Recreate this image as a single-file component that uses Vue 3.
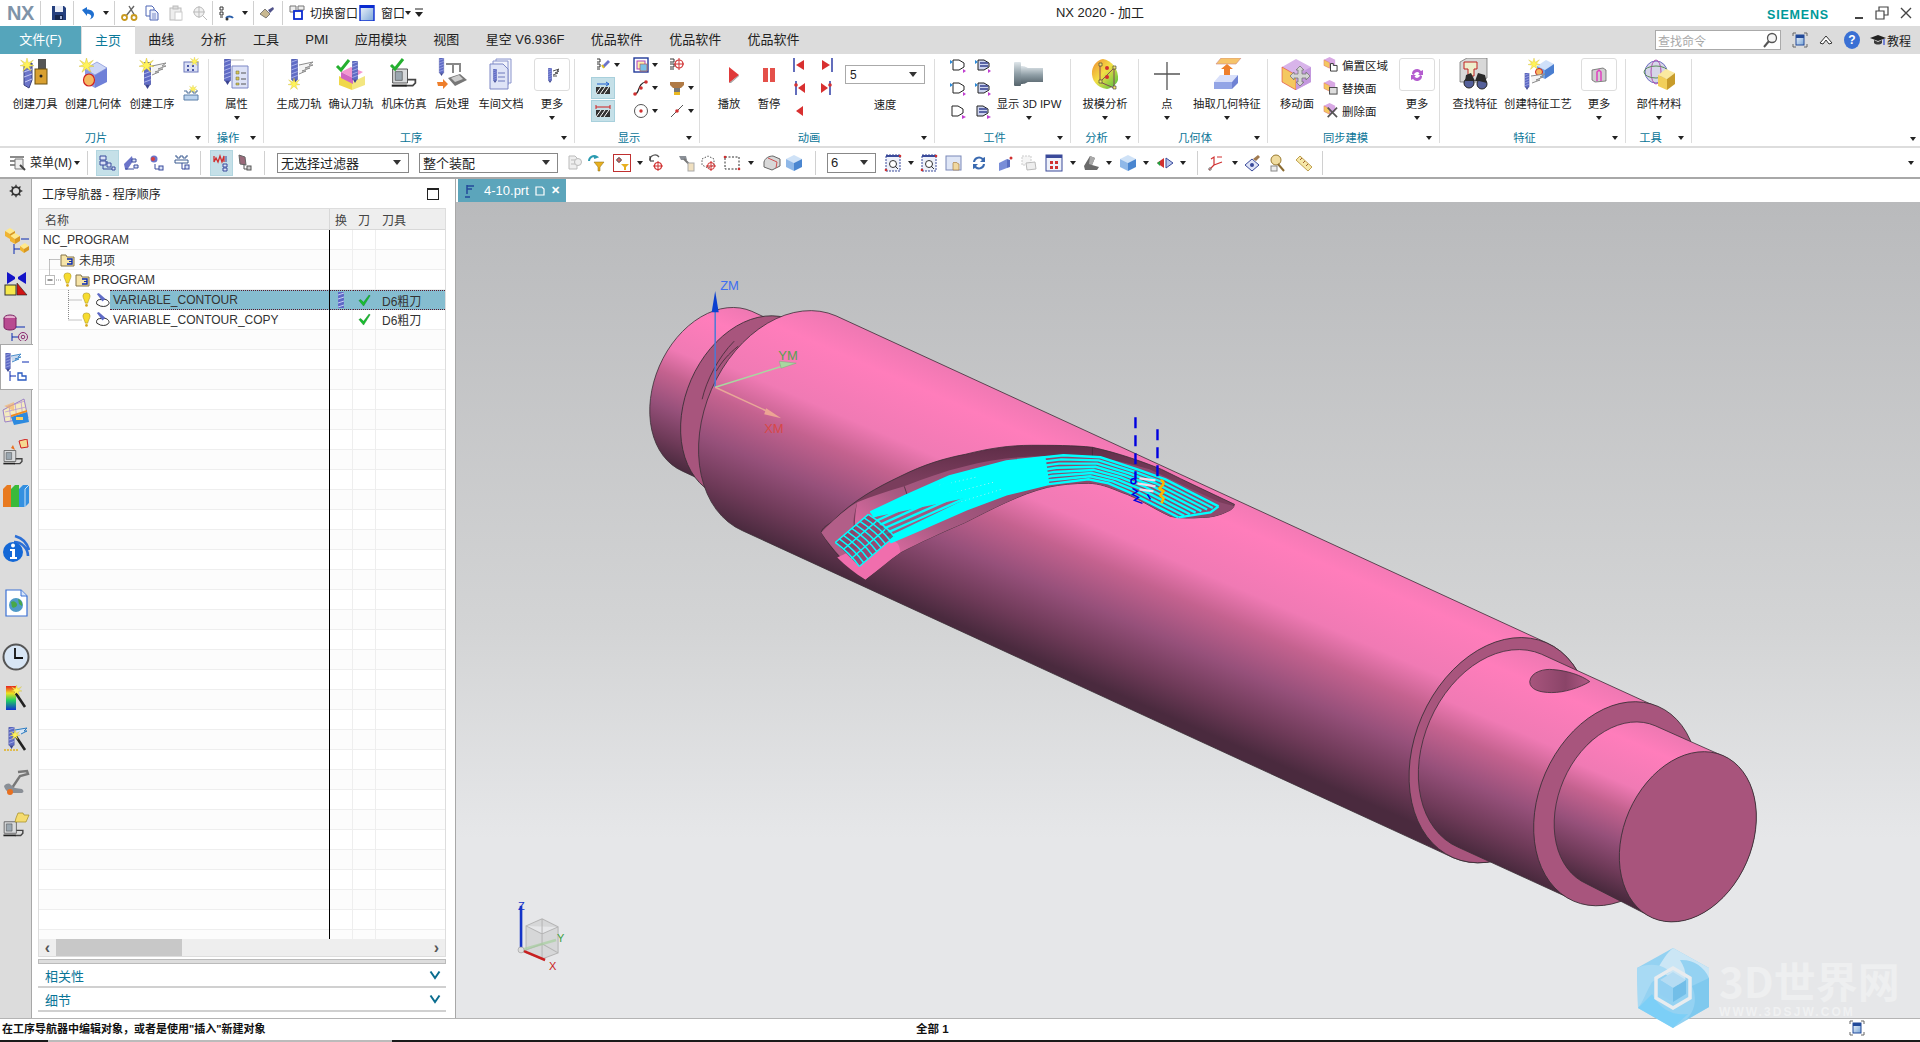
<script setup>
const place = (items) => {
  let cur = 0
  return items.map((it) => {
    const out = { ...it, ml: it.x - cur }
    cur = it.x + it.w
    return out
  })
}
const ic = (n, c, w = 18, on = false) => ({ k: 'i', n, x: c - w / 2, w, on })
const sep = (c) => ({ k: 'sep', x: c - 1, w: 2 })
const car = (c) => ({ k: 'cr', x: c - 4, w: 8 })
const txt = (text, x, w) => ({ k: 'text', text, x, w })
const combo = (text, x, w) => ({ k: 'combo', text, x, w })

const titleItems = place([
  { k: 'nx', text: 'NX', x: 4, w: 33 },
  sep(40), ic('s-save', 59), sep(73), ic('s-undo', 88), car(106), sep(114),
  ic('s-cut', 129), ic('s-copy', 152), ic('s-paste', 176), ic('s-move', 200), sep(212),
  ic('s-orient', 226), car(245), sep(253), ic('s-brush', 267), sep(282),
  ic('s-switch', 297), txt('切换窗口', 309, 50), ic('s-window', 367), txt('窗口', 380, 26), car(408), ic('s-cust', 419, 10),
  { k: 'title', text: 'NX 2020 - 加工', x: 1055, w: 90 },
  { k: 'sie', text: 'SIEMENS', x: 1767, w: 62 },
  ic('w-min', 1859, 12), ic('w-max', 1882, 14), ic('w-close', 1906, 14),
])

const tabs = ['主页', '曲线', '分析', '工具', 'PMI', '应用模块', '视图', '星空 V6.936F', '优品软件', '优品软件', '优品软件']

const big = (icon, text, w, caret = false) => ({ t: 'big', icon, text, w, caret })
const more = (icon, w) => ({ t: 'more', icon, text: '更多', w })
const col = (w, rows, h = 23) => ({ t: 'col', w, rows, h })
const r = (n, caret = false, on = false) => ({ n, caret, on })

const ribbon = [
  { label: '刀片', w: 209, pad: 6, items: [
    big('b-tool', '创建刀具', 58), big('b-geom', '创建几何体', 58), big('b-oper', '创建工序', 60),
    col(18, [r('s-prog'), r('s-mill')], 28),
  ] },
  { label: '操作', w: 55, pad: 1, items: [big('b-attr', '属性', 53, true)] },
  { label: '工序', w: 311, pad: 9, items: [
    big('b-gen', '生成刀轨', 52), big('b-verify', '确认刀轨', 52), big('b-sim', '机床仿真', 54),
    big('b-post', '后处理', 42), big('b-doc', '车间文档', 56), more('s-path', 46),
  ] },
  { label: '显示', w: 125, pad: 9, items: [
    col(38, [r('s-flag', true), r('s-hatch1', false, true), r('s-hatch2', false, true)]),
    col(38, [r('s-square', true), r('s-curve', true), r('s-circle', true)]),
    col(34, [r('s-target'), r('s-mug', true), r('s-line', true)]),
  ] },
  { label: '动画', w: 235, pad: 9, items: [
    big('b-play', '播放', 40), big('b-pause', '暂停', 40),
    col(20, [r('a-first'), r('a-stepb'), r('a-rev')]),
    col(36, [r('a-last'), r('a-stepf')]),
    { t: 'speed', w: 80, value: '5', text: '速度' },
  ] },
  { label: '工件', w: 136, pad: 11, items: [
    col(24, [r('w-a'), r('w-a'), r('w-b')]),
    col(26, [r('w-c'), r('w-c'), r('w-d')]),
    big('b-ipw', '显示 3D IPW', 66, true),
  ] },
  { label: '分析', w: 68, pad: 1, items: [big('b-draft', '拔模分析', 66, true)] },
  { label: '几何体', w: 129, pad: 4, items: [big('b-point', '点', 48, true), big('b-extract', '抽取几何特征', 72, true)] },
  { label: '同步建模', w: 172, pad: 4, items: [
    big('b-move', '移动面', 50),
    { t: 'list', w: 72, rows: [{ n: 's-off', text: '偏置区域' }, { n: 's-rep', text: '替换面' }, { n: 's-del', text: '删除面' }] },
    more('s-sync', 46),
  ] },
  { label: '特征', w: 186, pad: 7, items: [big('b-find', '查找特征', 56), big('b-feat', '创建特征工艺', 70), more('s-box', 52)] },
  { label: '工具', w: 66, pad: 0, items: [big('b-mat', '部件材料', 66, true)] },
]

const toolItems = place([
  ic('t-menu', 18, 18), txt('菜单(M)', 30, 42), car(77), sep(87),
  ic('t-n1', 107.5, 23, true), ic('t-n2', 131), ic('t-n3', 157), ic('t-n4', 183), sep(200),
  ic('t-n5', 221.5, 23, true), ic('t-n6', 245), sep(264),
  combo('无选择过滤器', 277, 132), combo('整个装配', 419, 139),
  ic('t-ghost', 574), ic('t-filter', 596), ic('t-target', 622), car(640), ic('t-cursor', 656), ic('t-hammer', 687),
  ic('t-dots', 709), ic('t-rect', 732), car(751), ic('t-face', 772), ic('t-cube', 794), sep(815),
  combo('6', 827, 49), ic('t-zoom', 893), car(911), ic('t-zoom', 929), ic('t-pan', 954), ic('t-rot', 979),
  ic('t-persp', 1006), ic('t-gbox', 1029), ic('t-grid', 1054), car(1073), ic('t-shade', 1091), car(1109),
  ic('t-cube', 1128), car(1146), ic('t-mir', 1165), car(1183), sep(1197),
  ic('t-csys', 1216), car(1235), ic('t-dia', 1252), ic('t-wiz', 1278), ic('t-rule', 1304), sep(1322), car(1911),
])

const railIcons = ['r-asm', 'r-con', 'r-part', 'r-nav', 'r-table', 'r-mach', 'r-books', 'r-info', 'r-web', 'r-clock', 'r-rainbow', 'r-wand', 'r-wrench', 'r-folder']
const railGaps = [28, 15, 16, 12, 17, 13, 14, 25, 27, 26, 14, 14, 14, 14]

const emptyRows = 31

// geometry of the shaft: every section is a tilted ellipse swept along the axis
const ROT = 113.5
const U = [-0.399, 0.917]
const RATIO = 0.724
const pts = (c, a) => ({
  top: `${(c[0] - U[0] * a).toFixed(1)} ${(c[1] - U[1] * a).toFixed(1)}`,
  bot: `${(c[0] + U[0] * a).toFixed(1)} ${(c[1] + U[1] * a).toFixed(1)}`,
})
const cyl = (id, c1, a1, c2, a2) => {
  const p1 = pts(c1, a1)
  const p2 = pts(c2, a2)
  return {
    id,
    d: `M${p1.top} A${a1} ${a1 * RATIO} ${ROT} 0 0 ${p1.bot} L${p2.bot} A${a2} ${a2 * RATIO} ${ROT} 0 0 ${p2.top} Z`,
    x1: c1[0] - U[0] * a1, y1: c1[1] - U[1] * a1, x2: c1[0] + U[0] * a1, y2: c1[1] + U[1] * a1,
  }
}
const disc = (c, a) => ({ cx: c[0], cy: c[1], rx: a, ry: a * RATIO, tr: `rotate(${ROT} ${c[0]} ${c[1]})` })

const flange = cyl('gf', [718, 392], 87, [772, 417], 87)
const groove = disc([755, 408], 95)
const body = cyl('gb', [790, 424], 117, [1500, 750.5], 117)
const ring1 = disc([1500, 750.5], 117)
const mid = cyl('gm', [1500, 751], 105, [1616, 804], 105)
const ring2 = disc([1616, 804], 106)
const tail = cyl('gt', [1621, 805], 86, [1688, 837], 88)
const face = disc([1688, 837], 88.4)
const sections = [flange, body, mid, tail]

const stops = [[0, '#ee78b2'], [0.14, '#ff7dbb'], [0.38, '#f07ab4'], [0.52, '#c4628f'], [0.7, '#96507a'], [0.87, '#6e3a58'], [1, '#4a2a3e']]

// tool path: lines interpolated between the upper and the lower edge of the band
const upper = [[871, 513], [905, 497], [950, 477], [1007, 462], [1064, 456], [1101, 458], [1138, 470], [1166, 480], [1219, 507]]
const lower = [[891, 543], [926, 528], [967, 510], [1007, 495], [1048, 485], [1089, 480], [1109, 484], [1130, 493], [1179, 518]]
const bandLines = Array.from({ length: 8 }, (_, i) => {
  const t = i / 7
  return 'M' + upper.map((p, j) => `${(p[0] + (lower[j][0] - p[0]) * t).toFixed(1)} ${(p[1] + (lower[j][1] - p[1]) * t).toFixed(1)}`).join(' L')
})
const ribs = Array.from({ length: 9 }, (_, i) => {
  const t = i / 8
  const ax = 836 + 33 * t, ay = 543 - 28 * t
  const bx = 860 + 35 * t, by = 567 - 30 * t
  return `M${ax} ${ay} Q${(ax + bx) / 2 + 3} ${(ay + by) / 2 - 1} ${bx} ${by}`
})
</script>

<template>
  <div class="app">
    <!-- shared icon sprites -->
    <svg class="sprites" width="0" height="0">
      <defs>
        <linearGradient id="gSteel" x1="0" y1="0" x2="0" y2="1"><stop offset="0" stop-color="#dfe6ea" /><stop offset=".5" stop-color="#8f9ea6" /><stop offset="1" stop-color="#56646c" /></linearGradient>
        <linearGradient id="gDraft" x1="0" y1="0" x2="1" y2="1"><stop offset="0" stop-color="#f08a30" /><stop offset=".45" stop-color="#f3de45" /><stop offset="1" stop-color="#45c040" /></linearGradient>
        <linearGradient id="gRain" x1="0" y1="0" x2="0" y2="1"><stop offset="0" stop-color="#e82020" /><stop offset=".3" stop-color="#f0e020" /><stop offset=".6" stop-color="#20d060" /><stop offset="1" stop-color="#1030d0" /></linearGradient>
        <linearGradient id="gWin" x1="0" y1="0" x2="1" y2="1"><stop offset="0" stop-color="#f4f8fc" /><stop offset="1" stop-color="#7aa6d8" /></linearGradient>
        <linearGradient id="gHole" x1="0" y1="0" x2="1" y2="0"><stop offset="0" stop-color="#a8557d" /><stop offset=".6" stop-color="#8a4468" /><stop offset="1" stop-color="#b05a85" /></linearGradient>
      </defs>

      <symbol id="star" viewBox="0 0 20 20"><polygon points="10,0 12,7 19,3 14,9 20,11 13,12 16,19 10,14 4,19 7,12 0,11 6,9 1,3 8,7" fill="#fff35a" stroke="#c8b020" stroke-width=".5" /></symbol>
      <symbol id="dr" viewBox="0 0 8 32"><rect width="8" height="27" rx="1" fill="#5f6bc6" stroke="#3b4490" stroke-width=".6" /><path d="M0 4l8-3M0 9l8-3M0 14l8-3M0 19l8-3M0 24l8-3" stroke="#bcc3f2" stroke-width="1" /><polygon points="1,27 7,27 4,32" fill="#3b4490" /></symbol>
      <symbol id="mc" viewBox="0 0 32 32"><path d="M3 8h17v16H3z" fill="#d8dadc" stroke="#444" /><path d="M6 11h8v10H6z" fill="#9ba7b0" stroke="#444" stroke-width=".7" /><path d="M20 20h9v4l-3 3h-8" fill="none" stroke="#444" stroke-width="2" /><path d="M2 27h17" stroke="#222" stroke-width="2.4" /></symbol>

      <!-- title bar -->
      <symbol id="s-save" viewBox="0 0 16 16"><path d="M1 1h12l2 2v12H1z" fill="#25407e" /><rect x="4" y="1" width="8" height="6" fill="#e8ecf6" /><rect x="4" y="10" width="8" height="5" fill="#16264c" /><rect x="9" y="11" width="2" height="3" fill="#9fb0d8" /></symbol>
      <symbol id="s-undo" viewBox="0 0 16 16"><path d="M2 5l5-3v2.500c4.500 0 7 2.200 7 5 0 2.600-2 4.500-4.500 5 1.800-1.500 2-2.900 1.500-4-.7-1.300-2-1.800-4-1.800V11z" fill="#1f6fd0" /></symbol>
      <symbol id="s-cut" viewBox="0 0 16 16"><path d="M13 1L5 11M8 1l6 10" stroke="#666" stroke-width="1.400" /><circle cx="3.500" cy="12.500" r="2.500" fill="none" stroke="#c89a20" stroke-width="1.800" /><circle cx="13" cy="12.500" r="2.500" fill="none" stroke="#c89a20" stroke-width="1.800" /></symbol>
      <symbol id="s-copy" viewBox="0 0 16 16"><path d="M2 1h6l2 2v8H2z" fill="#fff" stroke="#4f66b5" /><path d="M6 5h5l3 3v7H6z" fill="#e7ecfb" stroke="#4f66b5" /><path d="M8 9h4M8 11h4M8 13h4" stroke="#4f66b5" stroke-width=".7" /></symbol>
      <symbol id="s-paste" viewBox="0 0 16 16"><rect x="2" y="3" width="11" height="12" fill="#eee" stroke="#bbb" /><rect x="5" y="1" width="5" height="3" fill="#ddd" stroke="#bbb" /><rect x="7" y="7" width="7" height="8" fill="#fff" stroke="#ccc" /></symbol>
      <symbol id="s-move" viewBox="0 0 16 16"><circle cx="7" cy="7" r="5" fill="#f0f0f0" stroke="#bbb" /><path d="M7 1v12M1 7h12M10 10l5 5" stroke="#bbb" /></symbol>
      <symbol id="s-orient" viewBox="0 0 16 16"><path d="M2 2h3v3H2zM2 7h3v3H2zM2 12h3" fill="none" stroke="#333" /><path d="M8 13a4 3 0 017 0" fill="none" stroke="#2b5faa" stroke-width="2" /><circle cx="9" cy="14" r="1.500" fill="#333" /></symbol>
      <symbol id="s-brush" viewBox="0 0 16 16"><path d="M1 9l5-5 5 5-4 4z" fill="#c8b890" stroke="#555" stroke-width=".7" /><path d="M9 5l5-3 1 2-4 4z" fill="#50528a" /></symbol>
      <symbol id="s-switch" viewBox="0 0 16 16"><path d="M1 1h6v6H1zM9 1h6v4H9z" fill="#eee" stroke="#777" /><rect x="5" y="6" width="8" height="8" fill="#fff" stroke="#0a2bd0" stroke-width="1.800" /></symbol>
      <symbol id="s-window" viewBox="0 0 16 16"><rect x="1" y="0" width="14" height="16" fill="url(#gWin)" stroke="#0a2bd0" stroke-width="1.400" /><rect x="1" y="0" width="14" height="3" fill="#0a2bd0" /></symbol>
      <symbol id="s-cust" viewBox="0 0 10 16"><path d="M1 4h8" stroke="#222" /><path d="M1 7h8l-4 5z" fill="#222" /></symbol>
      <symbol id="w-min" viewBox="0 0 12 16"><path d="M2 13h8" stroke="#444" stroke-width="2" /></symbol>
      <symbol id="w-max" viewBox="0 0 14 16"><path d="M1 6h8v8H1zM4 6V2h9v8H9" fill="none" stroke="#444" stroke-width="1.200" /></symbol>
      <symbol id="w-close" viewBox="0 0 14 16"><path d="M2 3l10 10M12 3L2 13" stroke="#444" stroke-width="1.400" /></symbol>

      <!-- ribbon big -->
      <symbol id="b-tool" viewBox="0 0 32 32"><path d="M5 8l8-3v17l-3 8-5-3z" fill="#6b74c9" stroke="#39407e" /><path d="M5 14l8-3M5 19l8-3M6 24l7-3" stroke="#c6cbf4" /><rect x="19" y="1" width="8" height="10" fill="#555" /><rect x="16" y="11" width="12" height="15" fill="#d9a030" stroke="#6a5010" /><circle cx="22" cy="18" r="1.500" fill="#222" /><use href="#star" x="1" y="0" width="14" height="14" /></symbol>
      <symbol id="b-geom" viewBox="0 0 32 32"><polygon points="8,11 20,4 30,10 18,17" fill="#cdd7f6" stroke="#6f7fd0" stroke-width=".6" /><polygon points="8,11 18,17 18,30 8,24" fill="#8a9ae0" /><polygon points="18,17 30,10 30,24 18,30" fill="#6f80d8" /><ellipse cx="12" cy="22" rx="5.500" ry="6" fill="#f5b860" stroke="#d02020" stroke-width="1.200" /><use href="#star" x="2" y="0" width="15" height="15" /></symbol>
      <symbol id="b-oper" viewBox="0 0 32 32"><use href="#dr" x="8" y="4" width="7" height="27" /><path d="M16 8l14-3-4 3h4l-8 3h5l-8 3h4l-7 3" fill="#f4f4f4" stroke="#8c8c8c" /><use href="#star" x="3" y="0" width="15" height="15" /></symbol>
      <symbol id="b-attr" viewBox="0 0 32 32"><path d="M11 8l16 0v22H11z" fill="#dde2f6" stroke="#7c87c5" /><path d="M9 2h14" stroke="#bbb" /><path d="M15 13h3v3h-3zM15 19h3v3h-3zM15 25h3v2h-3z" fill="#d7c45a" stroke="#6c6c30" stroke-width=".5" /><path d="M20 15h5M20 21h5M20 26h5" stroke="#555" /><use href="#dr" x="3" y="1" width="7" height="26" /></symbol>
      <symbol id="b-gen" viewBox="0 0 32 32"><use href="#dr" x="8" y="1" width="7" height="25" /><path d="M16 7l14-3-4 3h4l-8 3h5l-8 3h4l-7 3" fill="#f4f4f4" stroke="#8c8c8c" /><use href="#star" x="5" y="20" width="12" height="12" /></symbol>
      <symbol id="b-verify" viewBox="0 0 32 32"><polygon points="4,18 17,24 17,32 4,27" fill="#f0d84a" /><polygon points="17,24 30,18 30,27 17,32" fill="#f3e680" /><polygon points="6,14 18,20 28,14 16,9" fill="#f398d0" /><polygon points="6,14 18,20 18,26 6,20" fill="#d066c0" /><use href="#dr" x="17" y="3" width="6" height="22" /><path d="M2 8l4 4 8-10" fill="none" stroke="#25b030" stroke-width="3" /></symbol>
      <symbol id="b-sim" viewBox="0 0 32 32"><use href="#mc" x="2" y="4" width="28" height="28" /><path d="M3 7l4 4 8-10" fill="none" stroke="#25b030" stroke-width="3" /></symbol>
      <symbol id="b-post" viewBox="0 0 32 32"><use href="#dr" x="2" y="0" width="7" height="18" /><path d="M10 6h14v8M17 6v9" fill="none" stroke="#888" stroke-width="2" /><path d="M12 20l12-4 7 6-12 6z" fill="#777" /><path d="M15 20l8-3 4 4-8 3z" fill="#ccc" /><path d="M1 24h6v-3l5 5-5 5v-3H2z" fill="#ee7f2c" /></symbol>
      <symbol id="b-doc" viewBox="0 0 32 32"><path d="M11 1h15v24H11z" fill="#f1f3fb" stroke="#8a94cc" /><path d="M8 3h15v24H8z" fill="#f1f3fb" stroke="#8a94cc" /><path d="M5 6h13l5 5v20H5z" fill="#dfe4f7" stroke="#7c87c5" /><use href="#dr" x="8" y="11" width="4" height="14" /><path d="M13 15h7M13 19h7M13 23h7" stroke="#6c78bc" /></symbol>
      <symbol id="s-path" viewBox="0 0 16 16"><use href="#dr" x="4" y="1" width="4" height="15" /><path d="M9 4l6-2-2 2h2l-4 2h3l-5 2M9 9h4" fill="none" stroke="#555" /></symbol>
      <symbol id="s-prog" viewBox="0 0 16 16"><rect x="1" y="5" width="14" height="10" fill="#dbe0f5" stroke="#6c78bc" /><path d="M4 8h2v2H4zM9 8h2v2H9zM4 12h2v2H4zM9 12h2v2H9z" fill="#4b58a8" /><use href="#star" x="7" y="0" width="9" height="9" /></symbol>
      <symbol id="s-mill" viewBox="0 0 16 16"><path d="M1 10h14v5H1z" fill="#bcd4ee" stroke="#5a7ea8" /><path d="M1 6h3v2h3V6h3v2h3V6h2" fill="none" stroke="#4d6f98" /><use href="#star" x="6" y="0" width="8" height="8" /></symbol>
      <symbol id="s-flag" viewBox="0 0 16 16"><path d="M2 2h3v3H2M2 7h3v3H2M2 12h3" fill="none" stroke="#333" /><path d="M7 9l6-6 2 2-6 6z" fill="#6b74c9" /><path d="M7 8l2 3" stroke="#e0c020" stroke-width="2" /></symbol>
      <symbol id="s-hatch1" viewBox="0 0 16 16"><rect x="1" y="7" width="14" height="7" fill="#333" /><path d="M1 14l5-7M5 14l5-7M9 14l5-7" stroke="#fff" /><path d="M2 4h12M11 2l3 2-3 2" fill="none" stroke="#1f5fd0" /></symbol>
      <symbol id="s-hatch2" viewBox="0 0 16 16"><rect x="1" y="7" width="14" height="7" fill="#333" /><path d="M1 14l5-7M5 14l5-7M9 14l5-7" stroke="#fff" /><path d="M1 4h14M1 2v4M15 2v4" fill="none" stroke="#d02020" /></symbol>
      <symbol id="s-square" viewBox="0 0 16 16"><rect x="1" y="1" width="14" height="14" fill="#fff" stroke="#223a9a" stroke-width="1.400" /><rect x="4" y="4" width="8" height="8" fill="#fbeeb0" stroke="#b040c0" /><rect x="7" y="7" width="7" height="7" fill="#7bc0e8" stroke="#c05030" stroke-width=".6" /></symbol>
      <symbol id="s-curve" viewBox="0 0 16 16"><path d="M2 14c5 0 2-11 11-12" fill="none" stroke="#222" stroke-width="1.200" /><circle cx="2" cy="14" r="1.800" fill="#d03030" /><circle cx="8" cy="8" r="1.800" fill="#d03030" /><circle cx="13" cy="2" r="1.800" fill="#d03030" /></symbol>
      <symbol id="s-circle" viewBox="0 0 16 16"><circle cx="8" cy="8" r="6.500" fill="#fff" stroke="#555" /><circle cx="8" cy="8" r="1.700" fill="#d03030" /></symbol>
      <symbol id="s-target" viewBox="0 0 16 16"><path d="M1 2h4v3H1M1 7h4v3H1M1 12h4" fill="none" stroke="#333" /><circle cx="10" cy="7" r="4" fill="none" stroke="#d03030" stroke-width="1.200" /><path d="M10 1v12M5 7h10" stroke="#d03030" /></symbol>
      <symbol id="s-mug" viewBox="0 0 16 16"><path d="M1 2h14v3l-3 3H4L1 5z" fill="#b07a45" /><rect x="5" y="8" width="6" height="4" fill="#777" /><rect x="5" y="12" width="6" height="3" fill="#eab820" /></symbol>
      <symbol id="s-line" viewBox="0 0 16 16"><path d="M2 14L14 2" stroke="#555" /><circle cx="8" cy="8" r="1.800" fill="#d03030" /></symbol>
      <symbol id="b-play" viewBox="0 0 32 32"><polygon points="16,9 16,25 26,17" fill="#e03a3a" /><polygon points="16,25 26,17 26,18 18,25" fill="#a0a0a0" /></symbol>
      <symbol id="b-pause" viewBox="0 0 32 32"><path d="M10 10h5v14h-5zM17 10h5v14h-5z" fill="#e4504a" /></symbol>
      <symbol id="a-first" viewBox="0 0 16 16"><path d="M3 1v14" stroke="#2030a0" stroke-width="1.400" /><polygon points="13,3 13,13 5,8" fill="#d83030" /></symbol>
      <symbol id="a-last" viewBox="0 0 16 16"><path d="M13 1v14" stroke="#2030a0" stroke-width="1.400" /><polygon points="3,3 3,13 11,8" fill="#d83030" /></symbol>
      <symbol id="a-stepb" viewBox="0 0 16 16"><path d="M5 1v14" stroke="#2030a0" stroke-width="1.400" /><circle cx="5" cy="5" r="1.800" fill="#d83030" /><polygon points="14,3 14,13 7,8" fill="#d83030" /></symbol>
      <symbol id="a-stepf" viewBox="0 0 16 16"><path d="M11 1v14" stroke="#2030a0" stroke-width="1.400" /><circle cx="11" cy="5" r="1.800" fill="#d83030" /><polygon points="2,3 2,13 9,8" fill="#d83030" /></symbol>
      <symbol id="a-rev" viewBox="0 0 16 16"><polygon points="12,3 12,13 5,8" fill="#d83030" /></symbol>
      <symbol id="w-a" viewBox="0 0 16 16"><path d="M3 3h6l5 3v4l-5 3H3z" fill="#fff" stroke="#222" /><path d="M0 3l3 2-3 2z" fill="#2c8ad8" /><path d="M13 12l3 2-3 2z" fill="#c040d0" /></symbol>
      <symbol id="w-b" viewBox="0 0 16 16"><path d="M2 3h6l5 3v4l-5 3H2z" fill="#fff" stroke="#222" /><path d="M12 12l4 2-4 2z" fill="#c040d0" /></symbol>
      <symbol id="w-c" viewBox="0 0 16 16"><path d="M3 3h6l5 3v4l-5 3H3z" fill="#cdd4ef" stroke="#222" /><path d="M5 6h8M5 9h8" stroke="#36408e" stroke-width="1.400" /><path d="M0 3l3 2-3 2z" fill="#2c8ad8" /><path d="M13 12l3 2-3 2z" fill="#c040d0" /></symbol>
      <symbol id="w-d" viewBox="0 0 16 16"><path d="M2 3h6l5 3v4l-5 3H2z" fill="#cdd4ef" stroke="#222" /><path d="M4 6h8M4 9h8" stroke="#36408e" stroke-width="1.400" /><path d="M12 12l4 2-4 2z" fill="#c040d0" /></symbol>
      <symbol id="b-ipw" viewBox="0 0 32 32"><rect x="1" y="4" width="7" height="24" rx="1" fill="url(#gSteel)" /><path d="M8 8c4 0 5 1 7 2h15v14H15c-2 1-3 2-7 2z" fill="url(#gSteel)" /></symbol>
      <symbol id="b-draft" viewBox="0 0 32 32"><path d="M14 1c8 1 16 10 15 21-1 4-6 8-11 9C8 30 2 22 3 13 4 7 8 2 14 1z" fill="url(#gDraft)" /><path d="M11 6v18l14 6M11 24l14-14v20M25 10" fill="none" stroke="#7a2a5a" stroke-width=".8" /><path d="M10 5h3v3h-3zM10 22h3v3h-3zM24 8h3v3h-3zM24 28h3v3h-3z" fill="#f7e870" stroke="#333" stroke-width=".6" /><circle cx="18" cy="10" r="2" fill="#d03030" /><circle cx="18" cy="19" r="2" fill="#d03030" /></symbol>
      <symbol id="b-point" viewBox="0 0 32 32"><path d="M16 4v28M3 16h26" stroke="#555" stroke-width="1.300" /></symbol>
      <symbol id="b-extract" viewBox="0 0 32 32"><polygon points="5,6 10,0 30,0 25,6" fill="#f6c46a" stroke="#c88" stroke-width=".6" /><path d="M13 17v-6h-3l6-5 6 5h-3v6z" fill="#ee7f2c" /><polygon points="3,24 9,17 27,17 21,24" fill="#d9e0fa" /><polygon points="3,24 21,24 21,31 3,31" fill="#93a5e6" /><polygon points="21,24 27,17 27,25 21,31" fill="#6f82d4" /></symbol>
      <symbol id="b-move" viewBox="0 0 32 32"><polygon points="15,1 30,9 30,24 15,32 1,24 1,9" fill="#d8b4ea" /><polygon points="1,9 15,17 15,32 1,24" fill="#f4c860" stroke="#e04040" stroke-width=".6" /><polygon points="15,17 30,9 30,24 15,32" fill="#c398de" /><path d="M19 8l4 4h-2v4h4v-2l4 4-4 4v-2h-4v4h2l-4 4-4-4h2v-4h-4v2l-4-4 4-4v2h4v-4h-2z" fill="#d4d4d4" stroke="#777" stroke-width=".8" /></symbol>
      <symbol id="s-off" viewBox="0 0 16 16"><polygon points="7,0 13,3 13,9 7,12 1,9 1,3" fill="#d8a8e4" /><polygon points="1,3 7,6 7,12 1,9" fill="#f4c860" stroke="#e06060" stroke-width=".4" /><path d="M8 15V7h3v2h4v6z" fill="#fff" stroke="#333" /></symbol>
      <symbol id="s-rep" viewBox="0 0 16 16"><polygon points="7,0 13,3 13,9 7,12 1,9 1,3" fill="#d8a8e4" /><polygon points="1,3 7,6 7,12 1,9" fill="#f4c860" stroke="#e06060" stroke-width=".4" /><rect x="7" y="8" width="8" height="7" fill="#ddd" stroke="#444" /></symbol>
      <symbol id="s-del" viewBox="0 0 16 16"><polygon points="7,0 13,3 13,9 7,12 1,9 1,3" fill="#d8a8e4" /><polygon points="1,3 7,6 7,12 1,9" fill="#f4c860" stroke="#e06060" stroke-width=".4" /><path d="M5 5l10 10M15 5L5 15" stroke="#555" stroke-width="1.800" /></symbol>
      <symbol id="s-sync" viewBox="0 0 16 16"><path d="M3 7a5 5 0 019-3l2-1v5h-5l1.500-1.500A3 3 0 005 8zM13 9a5 5 0 01-9 3l-2 1V8h5l-1.500 1.500A3 3 0 0011 8z" fill="#b45ccf" /></symbol>
      <symbol id="b-find" viewBox="0 0 32 32"><polygon points="1,4 8,0 28,0 28,20 20,24 1,24" fill="#d8d8d8" stroke="#666" stroke-width=".7" /><path d="M5 4h13v7h-3v7H9v-7H5z" fill="#eec" stroke="#c02020" /><circle cx="10" cy="25" r="5" fill="#55609a" stroke="#222" /><circle cx="23" cy="26" r="5" fill="#55609a" stroke="#222" /><path d="M7 17l5-2 4 8 3-8 7 2 2 8-8-2-4 0-4 0-6 0z" fill="#2a2a2a" /></symbol>
      <symbol id="b-feat" viewBox="0 0 32 32"><polygon points="15,8 24,2 32,6 23,12" fill="#cfe0fa" /><polygon points="15,8 23,12 23,21 15,17" fill="#6da0e6" /><polygon points="23,12 32,6 32,15 23,21" fill="#4a7ed0" /><circle cx="17" cy="14" r="3.500" fill="#f5b860" stroke="#d02020" /><use href="#star" x="6" y="0" width="12" height="12" /><use href="#dr" x="2" y="15" width="6" height="17" /><path d="M9 18l14-2-5 3h3l-7 3h4l-8 3" fill="#f4f4f4" stroke="#8c8c8c" /></symbol>
      <symbol id="s-box" viewBox="0 0 16 16"><polygon points="1,3 12,1 15,3 15,14 4,15 1,13" fill="#cfcfcf" stroke="#555" stroke-width=".7" /><path d="M6 14V5l2-2 2 2v9" fill="none" stroke="#e040c0" stroke-width="1.500" /></symbol>
      <symbol id="b-mat" viewBox="0 0 32 32"><circle cx="13" cy="14" r="11" fill="#d6d6e8" stroke="#6a6ac0" /><ellipse cx="13" cy="14" rx="5" ry="12" fill="none" stroke="#b04fb0" /><ellipse cx="13" cy="14" rx="12" ry="6" fill="none" stroke="#5a8a5a" /><polygon points="15,17 23,11 32,15 24,21" fill="#fbeaa0" /><polygon points="15,17 24,21 24,32 15,28" fill="#f2cf5a" /><polygon points="24,21 32,15 32,26 24,32" fill="#c89c2a" /></symbol>

      <!-- right of tab bar -->
      <symbol id="u-mag" viewBox="0 0 16 16"><circle cx="10" cy="6" r="4.500" fill="#f5f5f5" stroke="#555" stroke-width="1.300" /><path d="M7 9l-5 6" stroke="#555" stroke-width="2" /></symbol>
      <symbol id="u-fit" viewBox="0 0 16 16"><path d="M1 4V1h3M12 1h3v3M1 12v3h3M12 15h3v-3" fill="none" stroke="#666" /><rect x="4" y="3" width="8" height="10" fill="url(#gWin)" stroke="#224a9a" /><rect x="4" y="3" width="8" height="3" fill="#224a9a" /></symbol>
      <symbol id="u-up" viewBox="0 0 16 16"><path d="M2 11l6-7 6 7-3 1-3-4-3 4z" fill="#fff" stroke="#333" /></symbol>
      <symbol id="u-hat" viewBox="0 0 16 16"><path d="M0 6l8-3 8 3-8 3z" fill="#222" /><path d="M4 8v3c2 2 6 2 8 0V8l-4 2z" fill="#3a3a3a" /><path d="M14 7v6" stroke="#0a2bd0" /></symbol>

      <!-- second toolbar -->
      <symbol id="t-menu" viewBox="0 0 18 18"><path d="M1 3h14M1 7h9M1 11h9" stroke="#666" stroke-width="1.400" /><path d="M6 5h8v10H6z" fill="#eee" stroke="#777" /><path d="M11 11l5 5" stroke="#444" stroke-width="2" /></symbol>
      <symbol id="t-n1" viewBox="0 0 18 18"><path d="M1 2h6v4H1zM1 7h6v4H1zM8 9h4v4H8zM13 13h3v3h-3z" fill="#dbe3f7" stroke="#384a9c" /><path d="M4 11v4h9M7 8h2" stroke="#384a9c" fill="none" /></symbol>
      <symbol id="t-n2" viewBox="0 0 18 18"><path d="M10 2L2 10l1 5 2 1 6-9z" fill="#6b74c9" /><path d="M10 5h4v3h-4zM12 11h4v3h-4z" fill="#dbe3f7" stroke="#384a9c" /><path d="M3 15h9" stroke="#384a9c" /></symbol>
      <symbol id="t-n3" viewBox="0 0 18 18"><circle cx="6" cy="5" r="3.500" fill="#6b74c9" /><circle cx="5" cy="5" r="2" fill="#d64040" /><path d="M7 10v5h5" fill="none" stroke="#384a9c" /><rect x="11" y="12" width="4" height="4" fill="#dbe3f7" stroke="#384a9c" /></symbol>
      <symbol id="t-n4" viewBox="0 0 18 18"><path d="M1 2h2v2h3V2h3v2h3V2h2M1 6h13v3H1z" fill="none" stroke="#3a5a90" /><path d="M8 9v6h3" fill="none" stroke="#384a9c" /><rect x="11" y="11" width="4" height="4" fill="#dbe3f7" stroke="#384a9c" /></symbol>
      <symbol id="t-n5" viewBox="0 0 18 18"><path d="M1 2v6l2-4 2 4 2-6 2 6 2-6v6" fill="none" stroke="#d03030" stroke-width="1.300" /><path d="M13 2v6" stroke="#384a9c" /><path d="M10 10h4v3h-4zM10 14h4v3h-4z" fill="#dbe3f7" stroke="#384a9c" /></symbol>
      <symbol id="t-n6" viewBox="0 0 18 18"><path d="M3 1l6 2 1 8-6-1z" fill="#9a6a7a" stroke="#666" /><path d="M8 10v5h3" fill="none" stroke="#555" /><rect x="11" y="12" width="4" height="4" fill="#ccc" stroke="#555" /></symbol>
      <symbol id="t-ghost" viewBox="0 0 18 18"><path d="M4 2h6l2 2v11H4z" fill="#eee" stroke="#bbb" /><circle cx="13" cy="8" r="3.500" fill="#eee" stroke="#bbb" /><path d="M6 6h4M6 10h4" stroke="#bbb" /></symbol>
      <symbol id="t-filter" viewBox="0 0 18 18"><path d="M2 7a5 5 0 018-4l-3 1" fill="none" stroke="#2a9ab0" stroke-width="2" /><path d="M7 8h10l-4 5v4h-2v-4z" fill="#e8b020" stroke="#8a6a10" stroke-width=".5" /></symbol>
      <symbol id="t-target" viewBox="0 0 18 18"><rect x=".5" y=".5" width="17" height="17" fill="#fff" stroke="#c03030" /><path d="M6 3v6M3 6h6" stroke="#c03030" /><circle cx="6" cy="6" r="2" fill="none" stroke="#555" /><path d="M8 10h8l-3 3v3h-2v-3z" fill="#e8b020" /></symbol>
      <symbol id="t-cursor" viewBox="0 0 18 18"><path d="M3 6a5 5 0 019-3" fill="none" stroke="#555" stroke-width="1.300" /><path d="M3 2v5h4" fill="none" stroke="#222" /><circle cx="11" cy="12" r="3.500" fill="none" stroke="#d03030" stroke-width="1.200" /><path d="M11 7v10M6 12h10" stroke="#d03030" /></symbol>
      <symbol id="t-hammer" viewBox="0 0 18 18"><path d="M1 2h7l1 4H3z" fill="#8a8f96" /><path d="M6 5l5 5" stroke="#777" stroke-width="2" /><rect x="10" y="9" width="6" height="8" fill="#f0e0c0" stroke="#aaa" /></symbol>
      <symbol id="t-dots" viewBox="0 0 18 18"><path d="M2 5l6-3 6 3v6l-6 3-6-3z" fill="none" stroke="#555" stroke-dasharray="1.500 1.500" /><circle cx="11" cy="12" r="3.500" fill="none" stroke="#d03030" /><path d="M11 7v10M6 12h10" stroke="#d03030" /></symbol>
      <symbol id="t-rect" viewBox="0 0 18 18"><rect x="2" y="3" width="14" height="12" fill="none" stroke="#333" stroke-dasharray="2 1.500" /><circle cx="2" cy="3" r="1.300" fill="#d03030" /><circle cx="16" cy="15" r="1.300" fill="#d03030" /></symbol>
      <symbol id="t-face" viewBox="0 0 18 18"><path d="M1 8c1-4 5-6 9-6l7 3v7l-8 4-8-3z" fill="#d8d8d8" stroke="#666" /><path d="M5 4l9 4-1 6" fill="none" stroke="#d05050" /></symbol>
      <symbol id="t-cube" viewBox="0 0 18 18"><polygon points="1,5 9,1 17,5 9,9" fill="#cfe2f7" /><polygon points="1,5 9,9 9,17 1,13" fill="#8fb8e8" /><polygon points="9,9 17,5 17,13 9,17" fill="#4a86d0" /></symbol>
      <symbol id="t-zoom" viewBox="0 0 18 18"><rect x="2" y="1" width="14" height="16" fill="#eef1fa" stroke="#3a4a9a" stroke-dasharray="2 1" /><rect x="2" y="1" width="14" height="2" fill="#3a4a9a" /><circle cx="9" cy="10" r="3.500" fill="#fff" stroke="#333" /><path d="M11 12l3 3" stroke="#333" /><circle cx="2" cy="16" r="1.300" fill="#d03030" /><circle cx="16" cy="2" r="1.300" fill="#d03030" /></symbol>
      <symbol id="t-pan" viewBox="0 0 18 18"><rect x="1" y="2" width="15" height="14" fill="#dfe6f6" stroke="#7a88b8" /><path d="M8 16V9l1-1 1 1 1-1 1 1 2 1v6z" fill="#f0d8a0" stroke="#a07030" stroke-width=".6" /></symbol>
      <symbol id="t-rot" viewBox="0 0 18 18"><path d="M3 8a6 6 0 0110-4l2-1v5h-5l2-2a4 4 0 00-7 2M15 10a6 6 0 01-10 4l-2 1v-5h5l-2 2a4 4 0 007-2" fill="#3a6ab0" /></symbol>
      <symbol id="t-persp" viewBox="0 0 18 18"><polygon points="2,9 10,5 10,14 2,17" fill="#7a8ed8" /><polygon points="10,5 13,6 13,13 10,14" fill="#5a6ec0" /><circle cx="14" cy="4" r="1.500" fill="#d03030" /></symbol>
      <symbol id="t-gbox" viewBox="0 0 18 18"><path d="M2 2h9v9H2z" fill="#f5f5f5" stroke="#ccc" stroke-dasharray="2 1" /><path d="M6 9l9-1 1 7-9 1z" fill="#eee" stroke="#bbb" /></symbol>
      <symbol id="t-grid" viewBox="0 0 18 18"><rect x="1" y="1" width="16" height="16" fill="#eef1fa" stroke="#3a4a9a" /><rect x="1" y="1" width="16" height="3" fill="#3a4a9a" /><path d="M5 7h3v3H5zM10 7h3v3h-3zM5 12h3v3H5zM10 12h3v3h-3z" fill="#d03030" /></symbol>
      <symbol id="t-shade" viewBox="0 0 18 18"><path d="M2 12L8 2l5 2-3 7 7 2-2 3H3z" fill="#6a6a6a" /><path d="M8 2l5 2-3 7-3-1z" fill="#aaa" /></symbol>
      <symbol id="t-mir" viewBox="0 0 18 18"><polygon points="1,9 8,4 8,14" fill="#d03030" /><polygon points="1,9 4,7 4,12" fill="#20a040" /><polygon points="10,4 17,9 10,14" fill="#b8c8ee" stroke="#3a4a9a" /></symbol>
      <symbol id="t-csys" viewBox="0 0 18 18"><path d="M7 11V3l-3 2M7 11l8-3M7 11l-5 5" fill="none" stroke="#d03030" stroke-width="1.200" /><path d="M10 3h5" stroke="#d03030" /><circle cx="3" cy="15" r="1.300" fill="none" stroke="#888" /></symbol>
      <symbol id="t-dia" viewBox="0 0 18 18"><polygon points="9,5 16,11 9,17 2,11" fill="#dfe4f7" stroke="#3a4a9a" /><circle cx="9" cy="11" r="2" fill="#3a4a9a" /><path d="M10 5l5-4 2 2-4 4z" fill="#a07a50" /></symbol>
      <symbol id="t-wiz" viewBox="0 0 18 18"><circle cx="7" cy="6" r="5" fill="#f0dca0" stroke="#9a7a30" /><path d="M9 10l6 7" stroke="#8a6a30" stroke-width="2" /><rect x="2" y="12" width="6" height="5" fill="#eee" stroke="#888" /></symbol>
      <symbol id="t-rule" viewBox="0 0 18 18"><polygon points="1,6 5,2 17,13 13,17" fill="#f6e8a8" stroke="#c0a050" /><path d="M5 6l2-2M8 9l2-2M11 12l2-2" stroke="#a06030" /></symbol>

      <!-- left rail -->
      <symbol id="r-asm" viewBox="0 0 28 28"><polygon points="3,5 8,2 13,5 8,8" fill="#ffe98a" /><polygon points="3,5 8,8 8,13 3,10" fill="#f0b430" /><polygon points="8,8 13,5 13,10 8,13" fill="#d89820" /><polygon points="8,10 13,7 18,10 13,13" fill="#ffe98a" /><polygon points="8,10 13,13 13,18 8,15" fill="#f0b430" /><polygon points="13,13 18,10 18,15 13,18" fill="#d89820" /><path d="M19 13h8M12 18v10M12 23h6" stroke="#0a2bb0" stroke-width="1" fill="none" /><polygon points="18,20 23,17 27,20 22,23" fill="#ffe98a" /><polygon points="18,20 22,23 22,27 18,24" fill="#f0b430" /><polygon points="22,23 27,20 27,24 22,27" fill="#d89820" /></symbol>
      <symbol id="r-con" viewBox="0 0 28 28"><polygon points="5,3 13,8 13,10 5,15" fill="#1414c8" /><polygon points="24,3 16,8 16,10 24,15" fill="#1414c8" /><rect x="3" y="16" width="11" height="10" fill="#f6e84a" stroke="#333" /><polygon points="15,14 25,26 15,26" fill="#d01414" stroke="#222" stroke-width=".6" /></symbol>
      <symbol id="r-part" viewBox="0 0 28 28"><ellipse cx="8" cy="5" rx="6" ry="3" fill="#e6b0d0" stroke="#7a2060" /><path d="M2 5v9c0 4 12 4 12 0V5" fill="#b84a90" stroke="#7a2060" /><path d="M14 14h9M10 20v8M10 24h6" stroke="#0a2bb0" fill="none" /><circle cx="21" cy="24" r="4.500" fill="none" stroke="#8a2a70" /><circle cx="21" cy="24" r="1.800" fill="none" stroke="#8a2a70" /></symbol>
      <symbol id="r-nav" viewBox="0 0 28 28"><use href="#dr" x="3" y="0" width="6" height="19" /><path d="M9 3l10-2-3 3h3l-6 2h4l-7 3" fill="#c8d8ee" stroke="#2a7ac0" stroke-width=".8" /><path d="M20 9h7M8 18v10M8 23h6" stroke="#0a2bb0" fill="none" /><path d="M16 20h4v3h4v4h-8z" fill="none" stroke="#2a5ac0" stroke-width="1.300" /></symbol>
      <symbol id="r-table" viewBox="0 0 28 28"><polygon points="1,12 22,1 26,20 3,24" fill="#f4ebc0" stroke="#9a80c8" /><path d="M4 9l19-6M3 14l21-5M3 19l22-3M7 7l2 16M13 5l2 17M19 3l2 18" stroke="#b090d8" stroke-width=".7" /><path d="M2 8l10-4v9" fill="#f6b060" opacity=".6" /><polygon points="9,19 25,14 27,24 12,27" fill="#2d8adf" /><polygon points="9,17 25,12 25,14 9,19" fill="#f08a20" /><rect x="14" y="19" width="7" height="3" fill="#ffd060" /></symbol>
      <symbol id="r-mach" viewBox="0 0 28 28"><use href="#mc" x="0" y="6" width="22" height="22" /><polygon points="17,2 25,0 26,8 19,9" fill="#f5d890" stroke="#d02020" /><path d="M13 11l-4-2 2-3" fill="#e87020" /></symbol>
      <symbol id="r-books" viewBox="0 0 28 28"><path d="M1 8l4-4h4v22H1z" fill="#e87a20" /><path d="M9 8l4-4h4v22H9z" fill="#3aba3a" /><path d="M17 8l4-4h6v18l-4 4h-6z" fill="#3490e0" /><path d="M23 26V8l4-4" stroke="#cbe4fa" fill="none" /></symbol>
      <symbol id="r-info" viewBox="0 0 28 28"><path d="M12 8a14 14 0 0114 14M13 2a20 20 0 0114 14" fill="none" stroke="#2b6fd6" stroke-width="2.600" /><circle cx="11" cy="18" r="10" fill="#1468d6" /><circle cx="11" cy="11.500" r="2" fill="#fff" /><path d="M8 15h5v8h2v2H8v-2h2v-6H8z" fill="#fff" /></symbol>
      <symbol id="r-web" viewBox="0 0 28 28"><path d="M4 1h15l6 6v20H4z" fill="#fff" stroke="#3a70d4" stroke-width="1.200" /><path d="M19 1v6h6" fill="#d6e4fa" stroke="#3a70d4" /><circle cx="14" cy="16" r="7" fill="#4f9ac8" /><path d="M9 13c3-2 5 0 6 2s-3 5-5 3zM16 10c3 1 5 4 4 7l-3-2z" fill="#48a848" /></symbol>
      <symbol id="r-clock" viewBox="0 0 28 28"><circle cx="14" cy="14" r="12.500" fill="#d8e6f5" stroke="#555" stroke-width="2" /><path d="M13 5v10h8" fill="none" stroke="#111" stroke-width="1.800" /></symbol>
      <symbol id="r-rainbow" viewBox="0 0 28 28"><rect x="4" y="1" width="10" height="24" fill="url(#gRain)" /><path d="M13 7l10 15" stroke="#222" stroke-width="2.600" /><use href="#star" x="9" y="0" width="11" height="11" /></symbol>
      <symbol id="r-wand" viewBox="0 0 28 28"><use href="#dr" x="6" y="0" width="7" height="22" /><path d="M13 3l12-2-3 3h3l-6 3" fill="#d8e6f5" stroke="#2a7ac0" /><path d="M13 8l10 15" stroke="#222" stroke-width="2.600" /><use href="#star" x="8" y="3" width="10" height="10" /><path d="M2 23h14" stroke="#e0b020" stroke-width="1.500" stroke-dasharray="2 1" /></symbol>
      <symbol id="r-wrench" viewBox="0 0 28 28"><path d="M16 3l9-1 1 3-8 2-8 12" fill="none" stroke="#777" stroke-width="2.400" /><path d="M2 17c3-3 5-3 7-1l4 3 7 1c2 2 2 3 0 4H10c-4 0-7-3-8-7z" fill="#8a8f96" /><circle cx="8" cy="23" r="3" fill="#e87020" /></symbol>
      <symbol id="r-folder" viewBox="0 0 28 28"><use href="#mc" x="0" y="5" width="23" height="23" /><path d="M14 7l2-5h5l1 2h5l-3 7H13z" fill="#f5dc70" stroke="#a08a20" stroke-width=".7" /></symbol>
      <symbol id="r-gear" viewBox="0 0 16 16"><circle cx="8" cy="8" r="4.500" fill="none" stroke="#333" stroke-width="2" /><path d="M8 .8v3M8 12.200v3M.8 8h3M12.200 8h3M2.900 2.900L5 5M11 11l2.100 2.100M13.100 2.900L11 5M5 11l-2.100 2.100" stroke="#333" stroke-width="1.500" /></symbol>

      <!-- tree -->
      <symbol id="n-bulb" viewBox="0 0 10 16"><path d="M1 3.500a4 3.400 0 018 0c0 2-2 5-2.700 8H3.700C3 8.500 1 5.500 1 3.500z" fill="#f6dc30" stroke="#a89020" stroke-width=".6" /><circle cx="5" cy="14" r="1.500" fill="#d8a820" /></symbol>
      <symbol id="n-folder" viewBox="0 0 15 14"><path d="M1 2h5l1 2h7v9H1z" fill="#f6e4a8" stroke="#85754a" /><path d="M7 6h5v5H7" fill="none" stroke="#0a2bb0" stroke-width="1.400" /><path d="M9 8h3v1H9z" fill="#0a2bb0" /></symbol>
      <symbol id="n-op" viewBox="0 0 16 16"><path d="M5 7c-3 0-4 3-3 5l4 2c4 1 8 0 9-3 0-3-4-5-6-4z" fill="#fff" stroke="#222" /><path d="M2 1l2-1 7 6-3 3z" fill="#5f6bc6" /></symbol>
      <symbol id="n-check" viewBox="0 0 14 14"><path d="M1 7l2-1 3 3 6-8 1 1-7 11z" fill="#18c030" stroke="#108020" stroke-width=".5" /></symbol>
      <symbol id="n-dr" viewBox="0 0 8 16"><rect x="1" width="6" height="16" fill="#5f6bc6" /><path d="M1 3l6-2M1 7l6-2M1 11l6-2M1 15l6-2" stroke="#c6cbf4" /></symbol>
    </svg>

    <!-- title bar -->
    <header class="titlebar">
      <span v-for="(it, i) in titleItems" :key="i" class="slot" :class="it.k" :style="{ marginLeft: it.ml + 'px', width: it.w + 'px' }">
        <svg v-if="it.k === 'i'" :width="it.w" height="16"><use :href="'#' + it.n" /></svg>
        <i v-else-if="it.k === 'cr'" class="caret"></i>
        <template v-else-if="it.text">{{ it.text }}</template>
      </span>
    </header>

    <!-- tab bar -->
    <nav class="tabbar">
      <div class="file-tab">文件(F)</div>
      <div class="tabs">
        <div v-for="(t, i) in tabs" :key="i" class="tab" :class="{ active: i === 0 }">{{ t }}</div>
      </div>
      <div class="tab-right">
        <div class="search"><span>查找命令</span><svg width="16" height="16"><use href="#u-mag" /></svg></div>
        <svg class="ur first" width="16" height="16"><use href="#u-fit" /></svg>
        <svg class="ur" width="16" height="16"><use href="#u-up" /></svg>
        <span class="ur help">?</span>
        <svg class="ur" width="16" height="16"><use href="#u-hat" /></svg>
        <span class="help-text">教程</span>
      </div>
    </nav>

    <!-- ribbon -->
    <section class="ribbon">
      <div v-for="g in ribbon" :key="g.label" class="group" :style="{ width: g.w + 'px' }">
        <div class="g-body" :style="{ paddingLeft: g.pad + 'px' }">
          <template v-for="(it, i) in g.items" :key="i">
            <div v-if="it.t === 'big'" class="big" :style="{ width: it.w + 'px' }">
              <svg class="big-ic" width="32" height="32"><use :href="'#' + it.icon" /></svg>
              <span class="big-tx">{{ it.text }}</span>
              <i v-if="it.caret" class="caret low"></i>
            </div>
            <div v-else-if="it.t === 'more'" class="big" :style="{ width: it.w + 'px' }">
              <div class="morebox"><svg width="16" height="16"><use :href="'#' + it.icon" /></svg></div>
              <span class="big-tx">{{ it.text }}</span>
              <i class="caret low"></i>
            </div>
            <div v-else-if="it.t === 'col'" class="col" :class="{ wide: it.h > 23 }" :style="{ width: it.w + 'px' }">
              <div v-for="(c, j) in it.rows" :key="j" class="col-row" :class="{ on: c.on }" :style="{ height: it.h + 'px' }">
                <svg width="16" height="16"><use :href="'#' + c.n" /></svg>
                <i v-if="c.caret" class="caret side"></i>
              </div>
            </div>
            <div v-else-if="it.t === 'list'" class="col" :style="{ width: it.w + 'px' }">
              <div v-for="c in it.rows" :key="c.text" class="list-row">
                <svg width="15" height="15"><use :href="'#' + c.n" /></svg>
                <span>{{ c.text }}</span>
              </div>
            </div>
            <div v-else class="speed" :style="{ width: it.w + 'px' }">
              <div class="combo-box"><span>{{ it.value }}</span><i class="caret dark"></i></div>
              <span class="big-tx">{{ it.text }}</span>
            </div>
          </template>
        </div>
        <div class="g-foot"><span>{{ g.label }}</span><i class="caret small"></i></div>
      </div>
      <i class="caret small ribbon-end"></i>
    </section>

    <!-- second toolbar -->
    <section class="toolbar">
      <span v-for="(it, i) in toolItems" :key="i" class="slot" :class="[it.k, { on: it.on }]" :style="{ marginLeft: it.ml + 'px', width: it.w + 'px' }">
        <svg v-if="it.k === 'i'" width="18" height="18"><use :href="'#' + it.n" /></svg>
        <i v-else-if="it.k === 'cr'" class="caret"></i>
        <template v-else-if="it.k === 'text'">{{ it.text }}</template>
        <template v-else-if="it.k === 'combo'"><span>{{ it.text }}</span><i class="caret dark"></i></template>
      </span>
    </section>

    <main class="workspace">
      <!-- icon rail -->
      <aside class="rail">
        <svg class="gear" width="14" height="14"><use href="#r-gear" /></svg>
        <div v-for="(n, i) in railIcons" :key="n" class="rail-item" :class="{ active: i === 3 }" :style="{ marginTop: railGaps[i] + 'px' }">
          <svg width="28" height="28"><use :href="'#' + n" /></svg>
        </div>
      </aside>

      <!-- operation navigator -->
      <section class="panel">
        <div class="panel-title">
          <span>工序导航器 - 程序顺序</span>
          <i class="maxbtn"></i>
        </div>
        <div class="tree-table">
          <div class="row head">
            <div class="cell name">名称</div><div class="cell c2">换</div><div class="cell c3">刀</div><div class="cell c4">刀具</div>
          </div>
          <div class="rows">
            <svg class="tree-lines" width="120" height="120" viewBox="0 0 120 120">
              <path d="M10.500 29.500V49M10.500 29.500H21M17 50H23M29.500 60V90M29.500 70H43M29.500 90H43" fill="none" stroke="#888" stroke-dasharray="1 1" />
              <rect x="6.500" y="45.500" width="9" height="9" fill="#fff" stroke="#bbb" />
              <path d="M8.500 50h5" stroke="#333" />
            </svg>
            <div class="row"><div class="cell name lvl0">NC_PROGRAM</div><div class="cell c2"></div><div class="cell c3"></div><div class="cell c4"></div></div>
            <div class="row"><div class="cell name lvl1"><svg width="15" height="14"><use href="#n-folder" /></svg><span class="lbl">未用项</span></div><div class="cell c2"></div><div class="cell c3"></div><div class="cell c4"></div></div>
            <div class="row"><div class="cell name lvl2"><svg class="bulb" width="9" height="16"><use href="#n-bulb" /></svg><svg width="15" height="14"><use href="#n-folder" /></svg><span class="lbl">PROGRAM</span></div><div class="cell c2"></div><div class="cell c3"></div><div class="cell c4"></div></div>
            <div class="row selected">
              <div class="cell name lvl3"><svg class="bulb" width="9" height="16"><use href="#n-bulb" /></svg><svg width="15" height="15"><use href="#n-op" /></svg><span class="lbl sel">VARIABLE_CONTOUR</span></div>
              <div class="cell c2"><svg width="8" height="16"><use href="#n-dr" /></svg></div>
              <div class="cell c3"><svg width="13" height="13"><use href="#n-check" /></svg></div>
              <div class="cell c4">D6粗刀</div>
            </div>
            <div class="row">
              <div class="cell name lvl3"><svg class="bulb" width="9" height="16"><use href="#n-bulb" /></svg><svg width="15" height="15"><use href="#n-op" /></svg><span class="lbl">VARIABLE_CONTOUR_COPY</span></div>
              <div class="cell c2"></div>
              <div class="cell c3"><svg width="13" height="13"><use href="#n-check" /></svg></div>
              <div class="cell c4">D6粗刀</div>
            </div>
            <div v-for="n in emptyRows" :key="n" class="row"><div class="cell name"></div><div class="cell c2"></div><div class="cell c3"></div><div class="cell c4"></div></div>
            <i class="name-line"></i>
          </div>
          <div class="hscroll"><span class="arrow">‹</span><div class="track"><div class="thumb"></div></div><span class="arrow">›</span></div>
        </div>
        <div class="splitter"></div>
        <div class="fold"><span>相关性</span><svg width="12" height="10" viewBox="0 0 12 10"><path d="M1.500 1.500L6 8l4.500-6.500" fill="none" stroke="#0a6d8f" stroke-width="2" /></svg></div>
        <div class="fold"><span>细节</span><svg width="12" height="10" viewBox="0 0 12 10"><path d="M1.500 1.500L6 8l4.500-6.500" fill="none" stroke="#0a6d8f" stroke-width="2" /></svg></div>
      </section>

      <!-- graphics window -->
      <section class="graphics">
        <div class="doc-tabs">
          <div class="doc-tab">
            <svg width="14" height="14" viewBox="0 0 14 14"><path d="M3 1v9M3 2h7M3 5h5M1 13h5" stroke="#234a9a" stroke-width="1.500" fill="none" /></svg>
            <span class="doc-name">4-10.prt</span>
            <svg width="10" height="10" viewBox="0 0 10 10"><path d="M1 1h6l2 2v6H1z" fill="none" stroke="#fff" stroke-width="1.200" /></svg>
            <span class="doc-x">✕</span>
          </div>
        </div>
        <div class="view">
          <svg class="scene" viewBox="457 203 1463 815" preserveAspectRatio="none">
            <defs>
              <linearGradient v-for="s in sections" :id="s.id" :key="s.id" gradientUnits="userSpaceOnUse" :x1="s.x1" :y1="s.y1" :x2="s.x2" :y2="s.y2">
                <stop v-for="st in stops" :key="st[0]" :offset="st[0]" :stop-color="st[1]" />
              </linearGradient>
              <linearGradient id="gWall" gradientUnits="userSpaceOnUse" x1="1000" y1="440" x2="1000" y2="480"><stop offset="0" stop-color="#5a2a44" /><stop offset="1" stop-color="#7a3d5c" /></linearGradient>
              <linearGradient id="gFloor" gradientUnits="userSpaceOnUse" x1="1000" y1="460" x2="900" y2="590"><stop offset="0" stop-color="#8e4a6e" /><stop offset=".55" stop-color="#a85a82" /><stop offset="1" stop-color="#f272ae" /></linearGradient>
            </defs>

            <!-- left stub, groove -->
            <path :d="flange.d" :fill="`url(#${flange.id})`" class="edge" />
            <ellipse :cx="groove.cx" :cy="groove.cy" :rx="groove.rx" :ry="groove.ry" :transform="groove.tr" fill="#a8557d" class="edge" />
            <!-- main body -->
            <path :d="body.d" :fill="`url(#${body.id})`" class="edge" />
            <path d="M717 372c6-10 12-17 22-25M703 400c4-18 16-42 32-58" fill="none" stroke="#3c2a34" stroke-width=".8" />
            <!-- right hand step -->
            <ellipse :cx="ring1.cx" :cy="ring1.cy" :rx="ring1.rx" :ry="ring1.ry" :transform="ring1.tr" fill="#a8557d" class="edge" />
            <path :d="mid.d" :fill="`url(#${mid.id})`" class="edge" />
            <ellipse :cx="ring2.cx" :cy="ring2.cy" :rx="ring2.rx" :ry="ring2.ry" :transform="ring2.tr" fill="#a8557d" class="edge" />
            <path d="M1557 810c2-20 15-50 36-70" fill="none" stroke="#3c2a34" stroke-width=".8" />
            <path :d="tail.d" :fill="`url(#${tail.id})`" class="edge" />
            <ellipse :cx="face.cx" :cy="face.cy" :rx="face.rx" :ry="face.ry" :transform="face.tr" fill="#a8547c" class="edge" />
            <path d="M1530 682C1531 672 1545 669 1553 670 1568 671 1582 676 1590 682 1580 688 1565 693 1552 693 1540 693 1530 690 1530 682Z" fill="url(#gHole)" class="edge" />

            <!-- pocket -->
            <path d="M866 580C850 570 832 550 822 533 823 528 828 526 832 523 855 500 878 488 901 477 925 465 945 459 966 455 990 449 1010 446 1032 446 1052 446 1075 446 1093 448 1120 454 1142 462 1162 470 1188 483 1212 494 1235 505 1234 509 1231 511 1228 512 1220 516 1212 518 1203 518 1192 519 1180 519 1171 517 1155 510 1138 498 1122 493 1110 488 1100 484 1089 484 1074 484 1062 485 1048 488 1020 495 992 510 966 523 945 532 920 543 901 553 890 561 878 571 866 580Z" fill="url(#gWall)" class="edge" />
            <path d="M858 503C872 497 888 492 905 487 925 479 945 472 966 467 990 460 1020 457 1048 457 1063 456 1078 456 1093 457 1112 460 1132 465 1150 470 1175 482 1198 493 1220 503L1235 507C1234 509 1231 511 1228 512 1220 516 1212 518 1203 518 1192 519 1180 519 1171 517 1155 510 1138 498 1122 493 1110 488 1100 484 1089 484 1074 484 1062 485 1048 488 1020 495 992 510 966 523 945 532 920 543 901 553 890 561 878 571 866 580 858 570 852 530 858 503Z" fill="url(#gFloor)" />
            <path d="M1093 448v9M905 487l12 36" stroke="#3c2a34" stroke-width=".7" fill="none" />
            <path d="M858 503c-2 8-6 20-2 30 2 16 8 32 10 47-15-12-33-30-44-47 10-10 22-22 36-30z" fill="#b25e88" />
            <path d="M838 558c12-6 30-14 48-16 10-1 14 0 15 11-12 8-24 18-35 27-10-6-20-14-28-22z" fill="#f06ead" />

            <!-- tool path -->
            <polygon points="871,513 905,497 950,477 1007,462 1046,457 1050,485 1007,495 967,510 926,528 891,543" fill="#00ffff" />
            <polygon points="873,518 970,498 889,537" fill="#a05a80" />
            <path d="M940 486l36-8M950 494l44-11M962 502l40-12" stroke="#d9eef0" stroke-width=".8" stroke-dasharray="1 3" />
            <path v-for="(d, i) in bandLines" :key="'b' + i" :d="d" fill="none" stroke="#00ffff" stroke-width="2.400" />
            <path d="M1219 507L1211 513 1179 518" fill="none" stroke="#00ffff" stroke-width="2.400" />
            <path d="M836 543L869 515 895 537 860 567Z" fill="#7a3f60" opacity=".75" />
            <path v-for="(d, i) in ribs" :key="'r' + i" :d="d" fill="none" stroke="#00ffff" stroke-width="1.500" />
            <path d="M836 543L869 515M844 550L877 522M852 559L886 530M860 567L895 537" fill="none" stroke="#00ffff" stroke-width="1.400" />

            <!-- tool axis marks -->
            <path d="M1136 418v62M1158 430v50" stroke="#0000e0" stroke-width="2.400" stroke-dasharray="11 7" />
            <path d="M1140 479l16 2M1138 484l18 3M1140 490l14 2" stroke="#f3dde8" stroke-width="2.400" />
            <circle cx="1134" cy="482" r="2.500" fill="none" stroke="#0000e0" stroke-width="1.500" />
            <path d="M1133 489l5 3-5 3 6 3-4 3 8 3M1148 495l3 5" fill="none" stroke="#0000e0" stroke-width="1.500" />
            <path d="M1161 481c3 0 4 3 2 5l-3 3 4 3-3 4 3 3-2 5" fill="none" stroke="#ffb400" stroke-width="2.600" />

            <!-- working csys -->
            <path d="M716 388V312" stroke="#4a7ad8" stroke-width="1.500" />
            <polygon points="716,292 712.500,313 719.500,313" fill="#0a3fd0" />
            <path d="M716 388L783 367" stroke="#a8d8a0" stroke-width="1.500" />
            <polygon points="797,364 780,362 782,369" fill="#a8d8a0" stroke="#7ba87b" stroke-width=".5" />
            <path d="M716 388L768 412" stroke="#e8a898" stroke-width="1.500" />
            <polygon points="782,419 767,409 765,415" fill="#eda594" />
            <text x="721" y="291" class="axis" fill="#3f6ff0">ZM</text>
            <text x="779" y="361" class="axis" fill="#5aa050">YM</text>
            <text x="765" y="434" class="axis" fill="#d84848">XM</text>

            <!-- view triad -->
            <path d="M527 926l16-7 16 8v26l-16 6-16-6zM527 926l16 8 16-7M543 934v25M527 950l16-6 16 9M543 944V919" fill="#a8a8a8" fill-opacity=".25" stroke="#b4b4b4" />
            <path d="M522 950V906" stroke="#1434c8" stroke-width="2.600" />
            <path d="M522 950l24 10" stroke="#c82020" stroke-width="2.600" />
            <path d="M522 950l35-10" stroke="#a8d0a0" stroke-width="2.600" opacity=".7" />
            <circle cx="522" cy="950" r="3" fill="#ddd" stroke="#888" stroke-width=".5" />
            <text x="519" y="910" class="axis small-axis" fill="#1434c8">Z</text>
            <text x="558" y="942" class="axis small-axis" fill="#40a040">Y</text>
            <text x="550" y="970" class="axis small-axis" fill="#c82020">X</text>
          </svg>
        </div>
      </section>
    </main>

    <!-- status bar -->
    <footer class="status">
      <span class="st-main">在工序导航器中编辑对象，或者是使用"插入"新建对象</span>
      <span class="st-mid">全部 1</span>
      <svg class="st-ic" width="16" height="16"><use href="#u-fit" /></svg>
    </footer>
    <div class="taskbar"><div class="tb-light"></div></div>

    <!-- watermark -->
    <div class="watermark">
      <svg class="wm-logo" width="74" height="80" viewBox="0 0 74 80">
        <polygon points="37,0 73,20 73,59 37,80 2,60 1,20" fill="#94d2f2" />
        <path d="M37 0L73 20 73 30C68 18 56 11 44 12 52 24 50 34 46 40L22 20C27 12 30 6 37 0z" fill="#cbe6f5" />
        <path d="M1 20C14 14 28 17 34 24L16 34C10 44 8 52 2 60z" fill="#a8daf4" />
        <path d="M73 30V59L50 72C58 64 62 52 56 38z" fill="#7fc9ee" />
        <path d="M2 60L16 46C24 62 38 68 52 66L37 80z" fill="#78cff8" opacity=".85" />
        <polygon points="37,20 54,30 54,50 37,60 20,50 20,30" fill="none" stroke="#e8ecef" stroke-width="3.500" />
        <polygon points="37,24 50,32 37,40 24,32" fill="#b5dcf3" />
        <polygon points="24,32 37,40 37,54 24,46" fill="#93d0f2" />
        <polygon points="50,32 37,40 37,54 50,46" fill="#72bee8" />
      </svg>
      <div class="wm-text">
        <div class="wm-big">3D世界网</div>
        <div class="wm-small">WWW.3DSJW.COM</div>
      </div>
    </div>
  </div>
</template>

<style>
html, body { margin: 0; padding: 0; overflow: hidden; background: #fff; }
</style>

<style scoped>
.app {
  position: relative;
  width: 1920px;
  height: 1042px;
  display: flex;
  flex-direction: column;
  overflow: hidden;
  font-family: "Liberation Sans", "Noto Sans CJK SC", sans-serif;
  font-size: 12px;
  color: #222;
}
.sprites { position: absolute; }

/* shared slots for the two icon strips */
.slot { display: flex; align-items: center; justify-content: center; flex: none; height: 100%; white-space: nowrap; }
.slot.sep { width: 2px; }
.slot.sep::after { content: ""; width: 1px; height: 24px; background: #d0d0d0; }
.caret { display: inline-block; width: 0; height: 0; border: 3.500px solid transparent; border-top: 4px solid #222; border-bottom: 0; }

.titlebar { height: 26px; flex: none; display: flex; align-items: center; background: #fff; }
.slot.nx { font-size: 20px; line-height: 26px; font-weight: bold; color: #7f93a8; letter-spacing: -.5px; }
.slot.title { font-size: 13px; color: #222; padding-bottom: 3px; box-sizing: border-box; }
.slot.text { padding-bottom: 2px; box-sizing: border-box; }
.slot.sie { font-size: 12.500px; font-weight: bold; color: #009999; letter-spacing: .8px; padding-top: 3px; box-sizing: border-box; }

.tabbar { height: 28px; flex: none; display: flex; background: #dcdcdc; }
.file-tab { width: 81px; background: #55a5bb; color: #fff; font-size: 13px; line-height: 28px; text-align: center; }
.tabs { display: flex; margin-left: 1px; }
.tab { padding: 0 13.200px; line-height: 28px; font-size: 13px; color: #222; white-space: nowrap; }
.tab.active { width: 27px; padding: 0 13px; background: #fff; color: #0c7a9a; border-top: 1px solid #bbb; line-height: 27px; }
.tab-right { margin-left: auto; display: flex; align-items: center; padding-right: 9px; }
.search { height: 18px; border: 1px solid #aaa; background: #fff; display: flex; align-items: center; justify-content: space-between; padding: 0 2px; box-sizing: content-box; margin-right: 11px; width: 120px; }
.search span { color: #a8a8a8; font-size: 12px; }
.ur { margin-right: 10px; flex: none; }
.help { width: 16px; height: 18px; border-radius: 50%; background: #3a70d4; color: #fff; font-weight: bold; font-size: 12px; line-height: 18px; text-align: center; }
.help-text { margin-left: -9px; font-size: 12px; }

.ribbon { position: relative; height: 87px; padding-top: 5px; flex: none; display: flex; background: #fff; border-bottom: 2px solid #ddd; }
.group { height: 84px; flex: none; box-sizing: border-box; border-right: 1px solid #ddd; display: flex; flex-direction: column; }
.g-body { height: 70px; display: flex; }
.g-foot { position: relative; height: 14px; padding-right: 16px; text-align: center; line-height: 18px; font-size: 11.300px; color: #0a7597; }
.g-foot .caret { position: absolute; right: 7px; top: 7px; }
.big { display: flex; flex-direction: column; align-items: center; flex: none; }
.big-ic { margin-top: -1px; margin-bottom: 7px; flex: none; }
.big-tx { height: 14px; line-height: 14px; white-space: nowrap; font-size: 11.300px; }
.caret.low { margin-top: 5px; }
.morebox { width: 36px; height: 33px; margin-top: -1px; margin-bottom: 6px; border: 1px solid #ddd; border-radius: 3px; display: flex; align-items: center; justify-content: center; flex: none; box-sizing: border-box; }
.col { flex: none; display: flex; flex-direction: column; margin-top: -6px; }
.col.wide { margin-top: -8px; }
.col-row { display: flex; align-items: center; justify-content: center; gap: 3px; flex: none; }
.col-row.on svg { background: #c5e0e8; outline: 1px solid #a8d0dc; padding: 2px; box-sizing: content-box; width: 18px; height: 16px; }
.caret.side { margin-right: -8px; }
.list-row { height: 23px; display: flex; align-items: center; gap: 4px; padding-left: 1px; white-space: nowrap; font-size: 11.500px; }
.speed { display: flex; flex-direction: column; align-items: center; flex: none; }
.combo-box { width: 80px; height: 19px; margin-top: 6px; margin-bottom: 14px; box-sizing: border-box; border: 1px solid #aaa; display: flex; align-items: center; justify-content: space-between; padding: 0 7px 0 4px; }
.caret.dark { border-width: 4.500px; border-top-width: 5px; border-bottom: 0; border-top-color: #333; }
.caret.small { border-width: 3px; border-top-width: 4px; border-bottom: 0; }
.ribbon-end { position: absolute; right: 4px; top: 83px; }

.toolbar { flex: none; display: flex; align-items: center; background: #fff; border-bottom: 2px solid #a8a8a8; height: 29px; }
.toolbar .slot.sep::after { height: 24px; }
.slot.on { height: 26px; background: #c5e0e8; outline: 1px solid #b2d6e0; outline-offset: -1px; }
.slot.combo { height: 20px; box-sizing: border-box; border: 1px solid #888; justify-content: space-between; padding: 0 7px 0 3px; font-size: 13px; }

.workspace { flex: 1; min-height: 0; display: flex; }
.rail { width: 32px; flex: none; box-sizing: border-box; background: #dcdcdc; border-right: 1px solid #a8a8a8; padding-top: 5px; display: flex; flex-direction: column; align-items: center; }
.gear { flex: none; }
.rail-item { flex: none; width: 30px; display: flex; justify-content: center; margin-left: 1px; height: 28px; }
.rail-item.active { position: relative; background: #fff; }
.rail-item.active::before { content: ""; position: absolute; left: -1px; right: -2px; top: -9px; bottom: -9px; background: #fff; border: 1px solid #a8a8a8; border-right: 0; z-index: 0; }
.rail-item.active svg { position: relative; z-index: 1; }

.panel { width: 424px; flex: none; box-sizing: border-box; background: #fff; border-right: 1px solid #a8a8a8; padding-left: 6px; padding-right: 9px; display: flex; flex-direction: column; }
.panel-title { height: 29px; flex: none; display: flex; align-items: center; justify-content: space-between; padding: 0 7px 0 4px; font-size: 12px; color: #222; }
.maxbtn { width: 10px; height: 9px; border: 1px solid #222; border-top-width: 2px; }
.tree-table { width: 408px; height: 749px; flex: none; box-sizing: border-box; border: 1px solid #ddd; display: flex; flex-direction: column; }
.row { display: flex; height: 20px; flex: none; box-sizing: border-box; border-bottom: 1px solid #eee; }
.row.head { height: 21px; background: #eee; border-bottom: 1px solid #d8d8d8; }
.rows .row:nth-of-type(even) { background: #fcfcfc; }
.cell { height: 100%; display: flex; align-items: center; flex: none; box-sizing: border-box; white-space: nowrap; color: #333; }
.cell.name { width: 291px; }
.head .cell { padding-left: 6px; color: #444; }
.head .cell.name { border-right: 1px solid #d8d8d8; }
.cell.c2 { width: 23px; border-right: 1px solid #eee; justify-content: center; }
.cell.c3 { width: 23px; border-right: 1px solid #eee; justify-content: center; }
.cell.c4 { flex: 1; padding-left: 6px; }
.head .cell.c2, .head .cell.c3 { justify-content: center; padding-left: 0; }
.rows { position: relative; flex: 1; min-height: 0; overflow: hidden; }
.tree-lines { position: absolute; left: 0; top: 0; z-index: 1; pointer-events: none; }
.name-line { position: absolute; left: 290px; top: 0; bottom: 0; width: 1px; background: #000; }
.lvl0 { padding-left: 4px; }
.lvl1 { padding-left: 21px; }
.lvl2 { padding-left: 24px; gap: 3px; }
.lvl3 { padding-left: 43px; gap: 4px; }
.lbl { margin-left: 4px; }
.lvl2 .lbl { margin-left: 0; }
.lvl3 .lbl { margin-left: -4px; padding-left: 3px; height: 100%; display: flex; align-items: center; flex: 1; }
.row.selected { border-bottom: 0; }
.row.selected .sel, .row.selected .c2, .row.selected .c3, .row.selected .c4 { background: #85bdd0; border-top: 1px dotted #5a1a2a; border-bottom: 1px dotted #5a1a2a; border-right-color: #85bdd0; box-sizing: border-box; }
.hscroll { height: 17px; flex: none; background: #eee; display: flex; align-items: center; }
.arrow { width: 17px; text-align: center; font-size: 16px; font-weight: bold; line-height: 15px; color: #555; flex: none; }
.track { flex: 1; height: 100%; }
.thumb { width: 126px; height: 100%; background: #c8c8c8; }
.splitter { height: 5px; margin-top: 2px; width: 408px; flex: none; box-sizing: border-box; background: #ddd; border: 1px solid #bbb; }
.fold { width: 408px; height: 24px; flex: none; box-sizing: border-box; border-bottom: 2px solid #d0d0d0; display: flex; align-items: center; justify-content: space-between; padding: 0 5px 0 7px; color: #0a7597; font-size: 13px; }

.graphics { flex: 1; min-width: 0; display: flex; flex-direction: column; }
.doc-tabs { height: 23px; flex: none; background: #fff; display: flex; }
.doc-tab { width: 108px; margin-left: 2px; background: #5ca5bb; display: flex; align-items: center; gap: 6px; padding-left: 6px; box-sizing: border-box; color: #fff; }
.doc-name { margin-left: 0; font-size: 13px; }
.doc-x { font-size: 11px; font-weight: bold; }
.view { flex: 1; min-height: 0; background: linear-gradient(180deg, #b9babc 0%, #d3d4d5 52%, #e6e7e9 78%, #e6e7e9 100%); }
.scene { display: block; width: 100%; height: 100%; }
.edge { stroke: #3a2f36; stroke-width: .8; }
.axis { font: 13px "Liberation Sans", sans-serif; }
.small-axis { font-size: 11px; }

.status { height: 22px; flex: none; box-sizing: border-box; background: #fff; border-top: 1px solid #b4b4b4; display: flex; align-items: center; padding-bottom: 4px; }
.st-main { width: 916px; padding-left: 2px; box-sizing: border-box; font-size: 11px; color: #111; font-weight: bold; white-space: nowrap; }
.st-mid { font-size: 11.500px; font-weight: bold; color: #111; }
.st-ic { margin-left: auto; margin-right: 55px; }
.taskbar { height: 2px; flex: none; background: #1a1a1a; padding-left: 48px; }
.tb-light { width: 344px; height: 100%; background: #bbb; }

.watermark { position: absolute; left: 1636px; top: 948px; display: flex; pointer-events: none; }
.wm-logo { flex: none; }
.wm-text { margin-left: 9px; margin-top: 9px; }
.wm-big { font: bold 42px/46px "Noto Sans CJK SC", sans-serif; color: #eeeff0; white-space: nowrap; }
.wm-small { font: bold 12px/12px "Liberation Sans", sans-serif; color: #f0f1f2; letter-spacing: 2.100px; margin-top: 3px; white-space: nowrap; }
</style>
